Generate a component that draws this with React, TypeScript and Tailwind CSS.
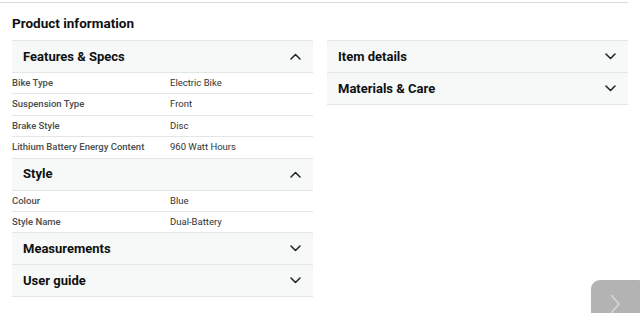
import React from "react";

type Row = { label: string; value: string };

const Chevron = ({ up }: { up?: boolean }) => (
  <svg width="11" height="7" viewBox="0 0 11 7" className="shrink-0">
    <polyline
      points={up ? "1,6 5.5,1.5 10,6" : "1,1 5.5,5.5 10,1"}
      fill="none"
      stroke="#1f2323"
      strokeWidth="1.5"
      strokeLinecap="round"
      strokeLinejoin="round"
    />
  </svg>
);

function SectionHeader({ title, open }: { title: string; open?: boolean }) {
  return (
    <div className="flex h-[32px] items-center justify-between border-t border-[#e3e6e6] bg-[#f7f8f8] pl-[11px] pr-[12px]">
      <span className="text-[13px] font-bold text-[#0f1111]">{title}</span>
      <Chevron up={open} />
    </div>
  );
}

function SpecRows({ rows }: { rows: Row[] }) {
  return (
    <div>
      {rows.map((r) => (
        <div key={r.label} className="flex h-[21.4px] items-center border-t border-[#e3e6e6] text-[9.5px]">
          <span className="w-[158px] font-medium text-[#494d4d]">{r.label}</span>
          <span className="text-[#2f3333]">{r.value}</span>
        </div>
      ))}
    </div>
  );
}

const features: Row[] = [
  { label: "Bike Type", value: "Electric Bike" },
  { label: "Suspension Type", value: "Front" },
  { label: "Brake Style", value: "Disc" },
  { label: "Lithium Battery Energy Content", value: "960 Watt Hours" },
];

const style: Row[] = [
  { label: "Colour", value: "Blue" },
  { label: "Style Name", value: "Dual-Battery" },
];

export default function App() {
  return (
    <div
      className="relative h-[313px] w-[640px] overflow-hidden bg-white"
      style={{ fontFamily: 'Roboto, "Noto Sans", sans-serif' }}
    >
      <div className="mt-[2px] h-px w-[628px] bg-[#d9dcdc]" />
      <h2 className="px-3 pt-[10px] text-[13.5px] leading-[20px] font-bold text-[#0f1111]">Product information</h2>

      <div className="mt-[7px] flex gap-[14px] px-3">
        <div className="w-[301px] border-b border-[#e3e6e6]">
          <SectionHeader title="Features & Specs" open />
          <SpecRows rows={features} />
          <SectionHeader title="Style" open />
          <SpecRows rows={style} />
          <SectionHeader title="Measurements" />
          <SectionHeader title="User guide" />
        </div>

        <div className="w-[301px] self-start border-b border-[#e3e6e6]">
          <SectionHeader title="Item details" />
          <SectionHeader title="Materials & Care" />
        </div>
      </div>

      {/* floating next button */}
      <button className="absolute left-[591px] top-[280px] flex h-[50px] w-[56px] items-start justify-start rounded-[9px] bg-[#b3b3b3] pl-[18px] pt-[13px]">
        <svg width="12" height="22" viewBox="0 0 12 22">
          <polyline points="2,2 10,11 2,20" fill="none" stroke="#d6d6d6" strokeWidth="1.6" />
        </svg>
      </button>
    </div>
  );
}
